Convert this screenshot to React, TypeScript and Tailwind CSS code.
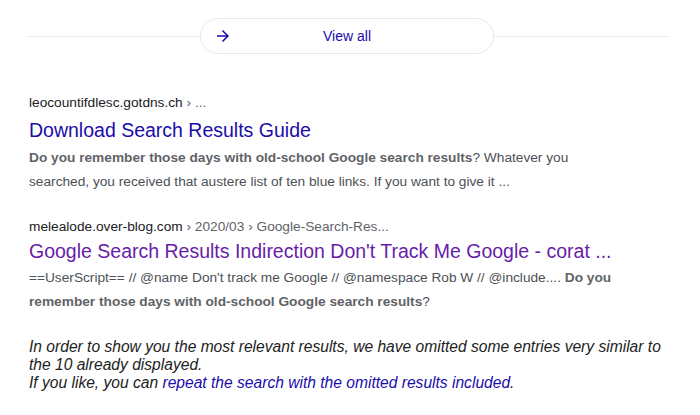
import React from "react";

export default function App() {
  return (
    <div className="w-[700px] h-[415px] bg-white overflow-hidden font-['Liberation_Sans',Arial,sans-serif]">
      <div className="flex items-center pt-[18px] pl-[28px]">
        <div className="w-[172px] h-px bg-[#ebebeb]" />
        <div className="w-[294px] h-[36px] rounded-full border border-[#e8e8e8] grid grid-cols-[1fr_auto_1fr] items-center px-[13px]">
          <svg width="18" height="18" viewBox="0 0 24 24" className="justify-self-start">
            <path fill="#1a0dab" d="M12 4l-1.41 1.41L16.17 11H4v2h12.17l-5.58 5.59L12 20l8-8z" />
          </svg>
          <span className="text-[14px] leading-[20px] text-[#1a0dab]">View all</span>
          <span />
        </div>
        <div className="w-[174px] h-px bg-[#ebebeb]" />
      </div>

      <div className="pl-[29px] pt-[39px]">
        <div className="text-[13.7px] leading-[20px] text-[#202124]">
          leocountifdlesc.gotdns.ch <span className="text-[#5f6368]">› ...</span>
        </div>
        <div className="mt-[4px] text-[19.5px] leading-[26px] text-[#1a0dab]">
          Download Search Results Guide
        </div>
        <div className="mt-[3px] text-[13.7px] leading-[24px] text-[#4d5156] w-[560px]">
          <b className="font-bold text-[#5f6368]">Do you remember those days with old-school Google search results</b>? Whatever you searched, you received that austere list of ten blue links. If you want to give it ...
        </div>

        <div className="mt-[23px] text-[13.7px] leading-[20px] text-[#202124]">
          melealode.over-blog.com <span className="text-[#5f6368]">› 2020/03 › Google-Search-Res...</span>
        </div>
        <div className="mt-[1px] text-[19.5px] leading-[26px] text-[#681da8]">
          Google Search Results Indirection Don't Track Me Google - corat ...
        </div>
        <div className="mt-[2px] text-[13.7px] leading-[24px] text-[#4d5156] w-[600px]">
          ==UserScript== // @name Don't track me Google // @namespace Rob W // @include.... <b className="font-bold text-[#5f6368]">Do you remember those days with old-school Google search results</b>?
        </div>

        <div className="mt-[24px] text-[15.6px] leading-[18px] italic text-[#222222] w-[642px]">
          In order to show you the most relevant results, we have omitted some entries very similar to the 10 already displayed.
          <br />
          If you like, you can <span className="text-[#1a0dab]">repeat the search with the omitted results included</span>.
        </div>
      </div>
    </div>
  );
}
